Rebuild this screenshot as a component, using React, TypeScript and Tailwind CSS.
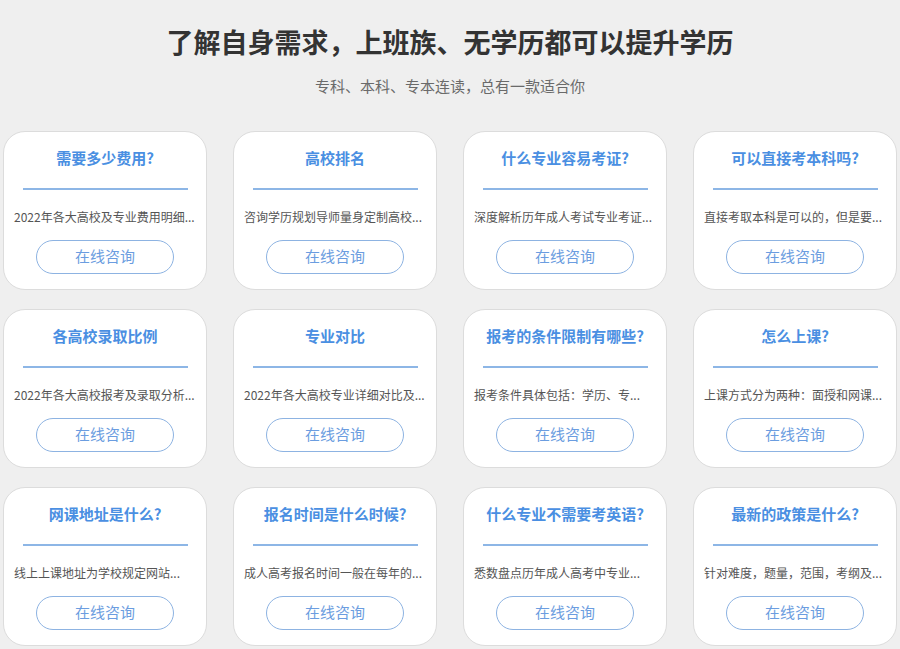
import React from "react";

const items = [
  { t: "需要多少费用?", d: "2022年各大高校及专业费用明细..." },
  { t: "高校排名", d: "咨询学历规划导师量身定制高校..." },
  { t: "什么专业容易考证?", d: "深度解析历年成人考试专业考证..." },
  { t: "可以直接考本科吗?", d: "直接考取本科是可以的，但是要..." },
  { t: "各高校录取比例", d: "2022年各大高校报考及录取分析..." },
  { t: "专业对比", d: "2022年各大高校专业详细对比及..." },
  { t: "报考的条件限制有哪些?", d: "报考条件具体包括：学历、专..." },
  { t: "怎么上课?", d: "上课方式分为两种：面授和网课..." },
  { t: "网课地址是什么?", d: "线上上课地址为学校规定网站..." },
  { t: "报名时间是什么时候?", d: "成人高考报名时间一般在每年的..." },
  { t: "什么专业不需要考英语?", d: "悉数盘点历年成人高考中专业..." },
  { t: "最新的政策是什么?", d: "针对难度，题量，范围，考纲及..." },
];

export default function App() {
  return (
    <div
      className="w-[900px] h-[649px] overflow-hidden bg-[#efefef]"
      style={{ fontFamily: '"Microsoft YaHei", "Noto Sans CJK SC", "Noto Sans", sans-serif' }}
    >
      <div className="pt-[24px] text-center">
        <h1 className="text-[27px] leading-[36px] font-bold text-[#333333]">
          了解自身需求，上班族、无学历都可以提升学历
        </h1>
        <p className="mt-[16px] text-[15px] leading-[20px] text-[#6a6a6a]">
          专科、本科、专本连读，总有一款适合你
        </p>
      </div>
      <div className="mt-[35px] px-[3px] grid grid-cols-4 gap-x-[26px] gap-y-[19px]">
        {items.map((it, i) => (
          <div
            key={i}
            className="h-[159px] bg-white border border-[#dcdcdc] rounded-[22px] flex flex-col items-center pt-[15px]"
          >
            <div className="text-[15px] leading-[22px] font-bold text-[#4a8fe2] text-center whitespace-nowrap">
              {it.t}
            </div>
            <div className="mt-[19px] w-[165px] h-[1.5px] bg-[#8db6e6]" />
            <div className="mt-[18px] self-stretch pl-[10px] text-[12px] leading-[18px] text-[#555555] whitespace-nowrap overflow-hidden">
              {it.d}
            </div>
            <div className="mt-[14px] w-[138px] h-[34px] rounded-full border border-[#8db3e2] flex items-center justify-center text-[15px] text-[#6b9de0]">
              在线咨询
            </div>
          </div>
        ))}
      </div>
    </div>
  );
}
